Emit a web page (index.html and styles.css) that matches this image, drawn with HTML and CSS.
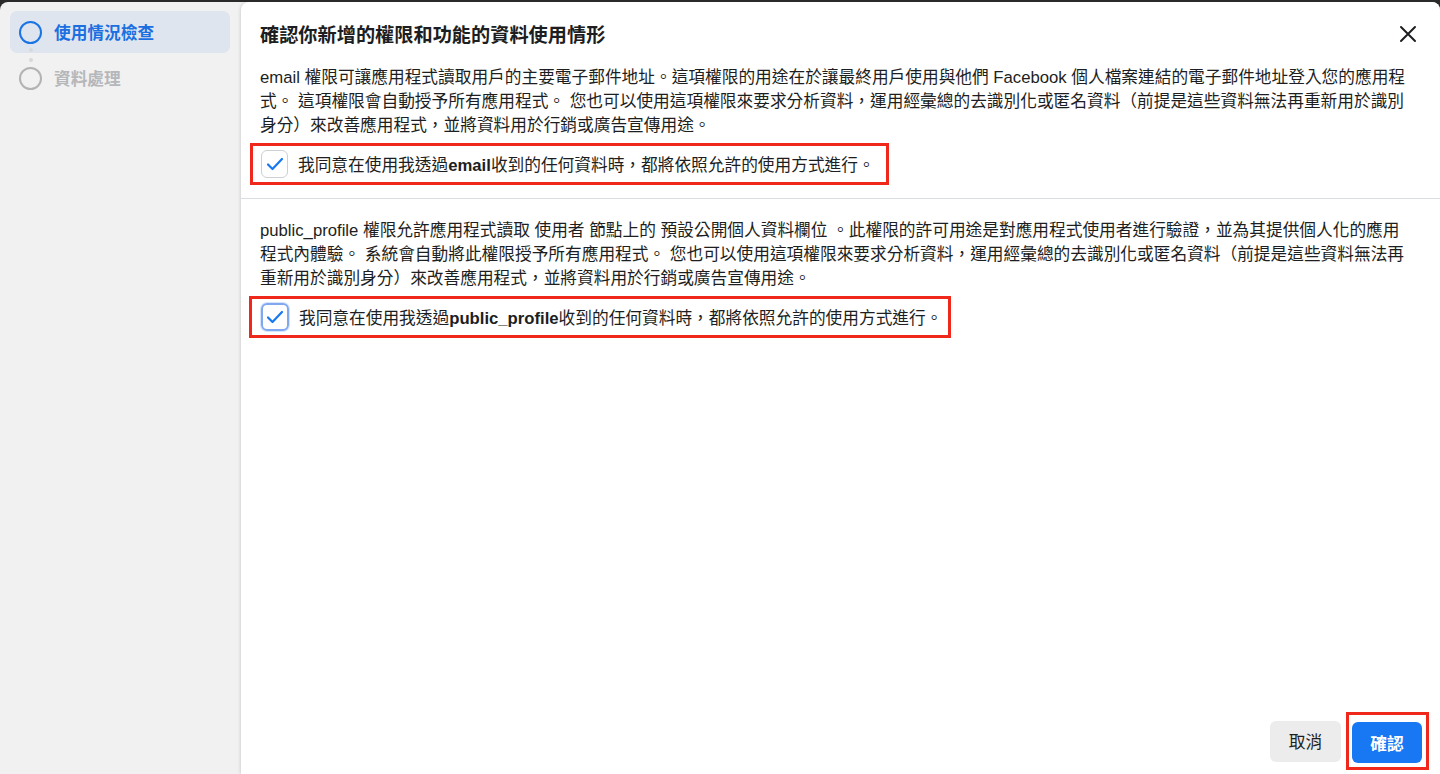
FILE: index.html
```html
<!DOCTYPE html>
<html lang="zh-Hant">
<head>
    <meta charset="UTF-8">
    <meta name="viewport" content="width=device-width, initial-scale=1.0">
    <title>確認資料使用情形</title>
    <link rel="stylesheet" href="styles.css">
</head>
<body>
    <div class="modal">
        <!-- Steps -->
        <div class="sidebar">
            <div class="step active">
                <span class="circle"></span>
                <span class="step-label">使用情況檢查</span>
            </div>
            <div class="connector"><span></span><span></span></div>
            <div class="step">
                <span class="circle"></span>
                <span class="step-label">資料處理</span>
            </div>
        </div>

        <!-- Main panel -->
        <div class="main">
            <div class="header">
                <h1>確認你新增的權限和功能的資料使用情形</h1>
                <button class="close-btn" aria-label="關閉">
                    <svg width="18" height="18" viewBox="0 0 18 18"><path d="M2 2 L16 16 M16 2 L2 16" stroke="#1c1e21" stroke-width="2" stroke-linecap="round"/></svg>
                </button>
            </div>

            <div class="section first">
                <p>email 權限可讓應用程式讀取用戶的主要電子郵件地址。這項權限的用途在於讓最終用戶使用與他們 Facebook 個人檔案連結的電子郵件地址登入您的應用程式。 這項權限會自動授予所有應用程式。 您也可以使用這項權限來要求分析資料，運用經彙總的去識別化或匿名資料（前提是這些資料無法再重新用於識別身分）來改善應用程式，並將資料用於行銷或廣告宣傳用途。</p>
                <label class="agree">
                    <span class="checkbox">
                        <svg width="18" height="14" viewBox="0 0 18 14"><path d="M2 7.5 L6.5 12 L16 2" fill="none" stroke="#1877f2" stroke-width="2.2" stroke-linecap="round" stroke-linejoin="round"/></svg>
                    </span>
                    <span>我同意在使用我透過<b>email</b>收到的任何資料時，都將依照允許的使用方式進行。</span>
                </label>
            </div>

            <div class="section second">
                <p>public_profile 權限允許應用程式讀取 使用者 節點上的 預設公開個人資料欄位 。此權限的許可用途是對應用程式使用者進行驗證，並為其提供個人化的應用程式內體驗。 系統會自動將此權限授予所有應用程式。 您也可以使用這項權限來要求分析資料，運用經彙總的去識別化或匿名資料（前提是這些資料無法再重新用於識別身分）來改善應用程式，並將資料用於行銷或廣告宣傳用途。</p>
                <label class="agree">
                    <span class="checkbox focused">
                        <svg width="18" height="14" viewBox="0 0 18 14"><path d="M2 7.5 L6.5 12 L16 2" fill="none" stroke="#1877f2" stroke-width="2.2" stroke-linecap="round" stroke-linejoin="round"/></svg>
                    </span>
                    <span>我同意在使用我透過<b>public_profile</b>收到的任何資料時，都將依照允許的使用方式進行。</span>
                </label>
            </div>

            <div class="footer">
                <button class="btn cancel">取消</button>
                <span class="highlight"><button class="btn confirm">確認</button></span>
            </div>
        </div>
    </div>
</body>
</html>
```

FILE: styles.css
```css
html, body { margin: 0; padding: 0; height: 100%; }
body { background: #2a2a2a; font-family: "Liberation Sans", "Noto Sans CJK TC", sans-serif; color: #1c1e21; overflow: hidden; }

.modal { display: flex; height: 772px; margin-top: 2px; background: #f1f1f1; border-radius: 8px 8px 0 0; overflow: hidden; }

.sidebar { width: 220px; padding: 9px 10px; flex-shrink: 0; }
.step { display: flex; align-items: center; height: 42px; padding-left: 9px; border-radius: 7px; font-size: 16.7px; font-weight: bold; color: #b5b7ba; }
.step.active { background: #dfe5ee; color: #1b6fe0; }
.circle { width: 19px; height: 19px; border: 2.5px solid #b3b3b3; border-radius: 50%; margin-right: 12px; }
.step.active .circle { border-color: #1b74e4; }
.connector { width: 4px; margin-left: 19px; height: 4px; position: relative; }
.connector span { position: absolute; width: 4px; height: 4px; border-radius: 50%; background: #d6d8dc; }
.connector span:first-child { top: -5px; }
.connector span:last-child { top: 5px; }

.main { flex: 1; background: #fff; display: flex; flex-direction: column; border-radius: 8px 0 0 0; box-shadow: -1px 0 3px rgba(0, 0, 0, 0.12); margin-left: 1px; }

.header { display: flex; align-items: center; justify-content: space-between; height: 64px; padding: 0 20px 0 19px; }
.header h1 { margin: 0; font-size: 19.2px; font-weight: bold; }
.close-btn { background: none; border: none; padding: 0; width: 24px; height: 24px; display: flex; align-items: center; justify-content: center; cursor: pointer; margin-top: -1px; }

.section { padding: 0 28px 0 19px; }
.section p { margin: 0; font-size: 16.7px; line-height: 24px; }
.section.first { padding-bottom: 13px; border-bottom: 1px solid #dadde1; }
.section.second { padding-top: 20px; }

.agree { display: inline-flex; align-items: center; border: 3px solid #f0281c; padding: 4px 11px 4px 8px; font-size: 16.7px; margin: 5px 0 0 -10px; cursor: pointer; }
.section.second .agree { margin-top: 5px; margin-left: -11px; padding-left: 9px; padding-right: 6px; }
.agree b { font-weight: bold; }
.checkbox { width: 25px; height: 26px; border: 1px solid #ccd0d5; border-radius: 6px; display: flex; align-items: center; justify-content: center; margin-right: 10px; box-sizing: content-box; }
.checkbox.focused { border: 2px solid #7fa8ef; width: 24px; height: 24px; box-shadow: 0 0 0 1px #d6e4fb; }

.footer { margin-top: auto; display: flex; justify-content: flex-end; align-items: center; gap: 5px; padding: 0 11px 4px 0; }
.btn { height: 41px; border: none; border-radius: 6px; font-family: inherit; font-size: 16.7px; font-weight: bold; cursor: pointer; }
.cancel { width: 71px; background: #ececec; color: #1c1e21; font-weight: normal; }
.highlight { border: 3px solid #f0281c; padding: 7px 4px 4px 3px; }
.confirm { width: 70px; background: #1877f2; color: #fff; display: block; }
```
